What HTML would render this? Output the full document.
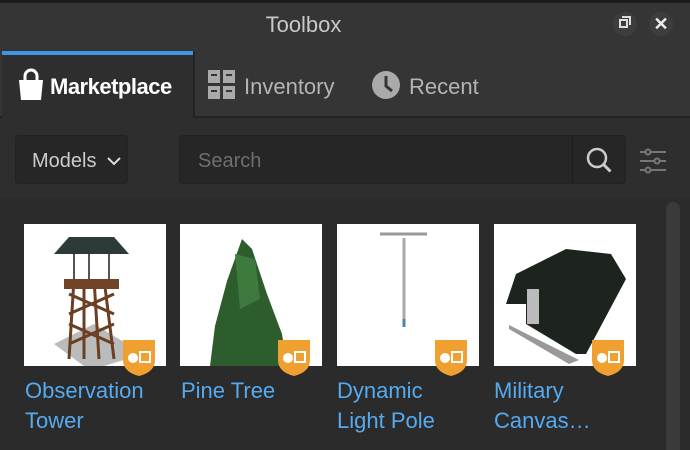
<!DOCTYPE html>
<html><head><style>
*{margin:0;padding:0;box-sizing:border-box}
html,body{width:690px;height:450px;overflow:hidden}
body{background:#2b2b2b;font-family:"Liberation Sans",sans-serif;position:relative}
.a{position:absolute}
.lbl{color:#55aaf0;font-size:22px;line-height:30px}
.th{background:#fff;width:142px;height:142px;top:224px;overflow:hidden}
.badge{width:36px;height:38px;top:338px}
</style></head><body>
<div class="a" style="left:0;top:0;width:690px;height:3px;background:#1c1c1c"></div>
<div class="a" style="left:0;top:3px;width:690px;height:48px;background:#353535"></div>
<div class="a" style="left:0;top:10px;width:607px;text-align:center;color:#c8c8c8;font-size:22px;line-height:30px">Toolbox</div>
<div class="a" style="left:613px;top:12px;width:24px;height:24px;border-radius:12px;background:#3d3d3d"></div>
<div class="a" style="left:619px;top:19px;width:9px;height:9px;border:2px solid #ddd"></div>
<div class="a" style="left:622px;top:16px;width:9px;height:9px;border-top:2px solid #ddd;border-right:2px solid #ddd"></div>
<div class="a" style="left:649px;top:12px;width:24px;height:24px;border-radius:12px;background:#3d3d3d;color:#eee;font-size:18px;font-weight:bold;text-align:center;line-height:24px">✕</div>
<div class="a" style="left:0;top:51px;width:690px;height:67px;background:#353535"></div>
<div class="a" style="left:2px;top:51px;width:191px;height:68px;background:#2e2e2e;border-top:4px solid #3b97e3"></div>
<div class="a" style="left:0;top:116px;width:690px;height:2px;background:#232323"></div>
<div class="a" style="left:193px;top:51px;width:2px;height:67px;background:#232323"></div>
<div class="a" style="left:2px;top:116px;width:191px;height:2px;background:#2e2e2e"></div>
<svg class="a" style="left:16px;top:68px" width="30" height="34"><path d="M9 12V8a6 6 0 0 1 12 0v4" stroke="#fff" stroke-width="3" fill="none"/><path d="M3 12h24l-2 20H5z" fill="#fff"/></svg>
<div class="a" style="left:50px;top:72px;color:#fff;font-weight:bold;font-size:22px;line-height:30px;letter-spacing:-0.5px">Marketplace</div>
<svg class="a" style="left:208px;top:70px" width="28" height="30"><g fill="#aaa"><rect x="0" y="0" width="12" height="13"/><rect x="15" y="0" width="12" height="13"/><rect x="0" y="16" width="12" height="13"/><rect x="15" y="16" width="12" height="13"/></g><g fill="#353535"><rect x="3" y="4" width="6" height="2"/><rect x="18" y="4" width="6" height="2"/><rect x="3" y="20" width="6" height="2"/><rect x="18" y="20" width="6" height="2"/></g></svg>
<div class="a" style="left:244px;top:72px;color:#b4b4b4;font-size:22px;line-height:30px">Inventory</div>
<svg class="a" style="left:371px;top:70px" width="30" height="30"><circle cx="15" cy="15" r="14" fill="#aaa"/><path d="M15 6v10l6 5" stroke="#353535" stroke-width="3" fill="none"/></svg>
<div class="a" style="left:409px;top:72px;color:#b4b4b4;font-size:22px;line-height:30px">Recent</div>
<div class="a" style="left:0;top:118px;width:690px;height:80px;background:#2e2e2e"></div>
<div class="a" style="left:15px;top:135px;width:113px;height:49px;background:#262626;border-radius:4px;border:1px solid #222"></div>
<div class="a" style="left:32px;top:147px;color:#ccc;font-size:20px;line-height:28px">Models</div>
<svg class="a" style="left:106px;top:156px" width="16" height="10"><path d="M2 2l6 6 6-6" stroke="#ddd" stroke-width="2" fill="none"/></svg>
<div class="a" style="left:179px;top:135px;width:447px;height:49px;background:#262626;border-radius:4px;border:1px solid #222"></div>
<div class="a" style="left:572px;top:136px;width:1px;height:47px;background:#1c1c1c"></div>
<div class="a" style="left:198px;top:147px;color:#6e6e6e;font-size:20px;line-height:28px">Search</div>
<svg class="a" style="left:585px;top:146px" width="30" height="30"><circle cx="12" cy="12" r="9" stroke="#ccc" stroke-width="2.5" fill="none"/><path d="M18.5 18.5l7 7" stroke="#ccc" stroke-width="3"/></svg>
<svg class="a" style="left:640px;top:148px" width="26" height="26"><g stroke="#777" stroke-width="2" fill="none"><path d="M0 4h26M0 13h26M0 22h26"/><circle cx="8" cy="4" r="2.5" fill="#2e2e2e"/><circle cx="17" cy="13" r="2.5" fill="#2e2e2e"/><circle cx="8" cy="22" r="2.5" fill="#2e2e2e"/></g></svg>
<div class="a" style="left:666px;top:202px;width:14px;height:260px;background:#3a3a3a;border-radius:7px"></div>
<div class="a th" style="left:24px">
<svg width="142" height="142"><polygon points="30,120 70,100 120,130 80,142 60,142" fill="#bbb"/><g stroke="#6a3f22" stroke-width="3" fill="none"><path d="M50 55l-5 80M80 55l10 80M60 55l0 80M70 55l5 80M45 70l45 20M90 70l-45 20M45 100l45 20M90 100l-45 20"/></g><rect x="40" y="55" width="55" height="10" fill="#704428"/><path d="M50 30v25M85 30v25M65 30v25" stroke="#555" stroke-width="2"/><path d="M30 30l15-17h45l15 17z" fill="#2d3a3a"/></svg></div>
<div class="a th" style="left:180px">
<svg width="142" height="142"><path d="M62 15l10 10 15 45 15 40 5 32H30l5-40 12-45z" fill="#2d5c2d"/><path d="M55 30l20 5 5 40-20 10z" fill="#3e7a3e"/></svg></div>
<div class="a th" style="left:337px">
<svg width="142" height="142"><path d="M43 10h47" stroke="#999" stroke-width="3"/><path d="M67 14v88" stroke="#aaa" stroke-width="3"/><path d="M67 95v8" stroke="#48a" stroke-width="3"/></svg></div>
<div class="a th" style="left:494px">
<svg width="142" height="142"><path d="M12 80l10-30 50-25 45 5 15 25-40 75-10 0-50-30 0-20z" fill="#1d241d"/><path d="M15 105l60 35 10-4-70-35z" fill="#999"/><rect x="33" y="65" width="12" height="35" fill="#bbb"/></svg></div>
<svg class="a badge" style="left:121px"><path d="M2 2h32v20q0 12-16 16q-16-4-16-16z" fill="#f0a030"/><circle cx="12" cy="20" r="5" fill="#fff"/><rect x="19" y="14" width="10" height="10" fill="none" stroke="#fff" stroke-width="2"/></svg>
<svg class="a badge" style="left:276px"><path d="M2 2h32v20q0 12-16 16q-16-4-16-16z" fill="#f0a030"/><circle cx="12" cy="20" r="5" fill="#fff"/><rect x="19" y="14" width="10" height="10" fill="none" stroke="#fff" stroke-width="2"/></svg>
<svg class="a badge" style="left:433px"><path d="M2 2h32v20q0 12-16 16q-16-4-16-16z" fill="#f0a030"/><circle cx="12" cy="20" r="5" fill="#fff"/><rect x="19" y="14" width="10" height="10" fill="none" stroke="#fff" stroke-width="2"/></svg>
<svg class="a badge" style="left:590px"><path d="M2 2h32v20q0 12-16 16q-16-4-16-16z" fill="#f0a030"/><circle cx="12" cy="20" r="5" fill="#fff"/><rect x="19" y="14" width="10" height="10" fill="none" stroke="#fff" stroke-width="2"/></svg>
<div class="a lbl" style="left:25px;top:376px">Observation<br>Tower</div>
<div class="a lbl" style="left:181px;top:376px">Pine Tree</div>
<div class="a lbl" style="left:337px;top:376px">Dynamic<br>Light Pole</div>
<div class="a lbl" style="left:494px;top:376px">Military<br>Canvas…</div>
</body></html>
